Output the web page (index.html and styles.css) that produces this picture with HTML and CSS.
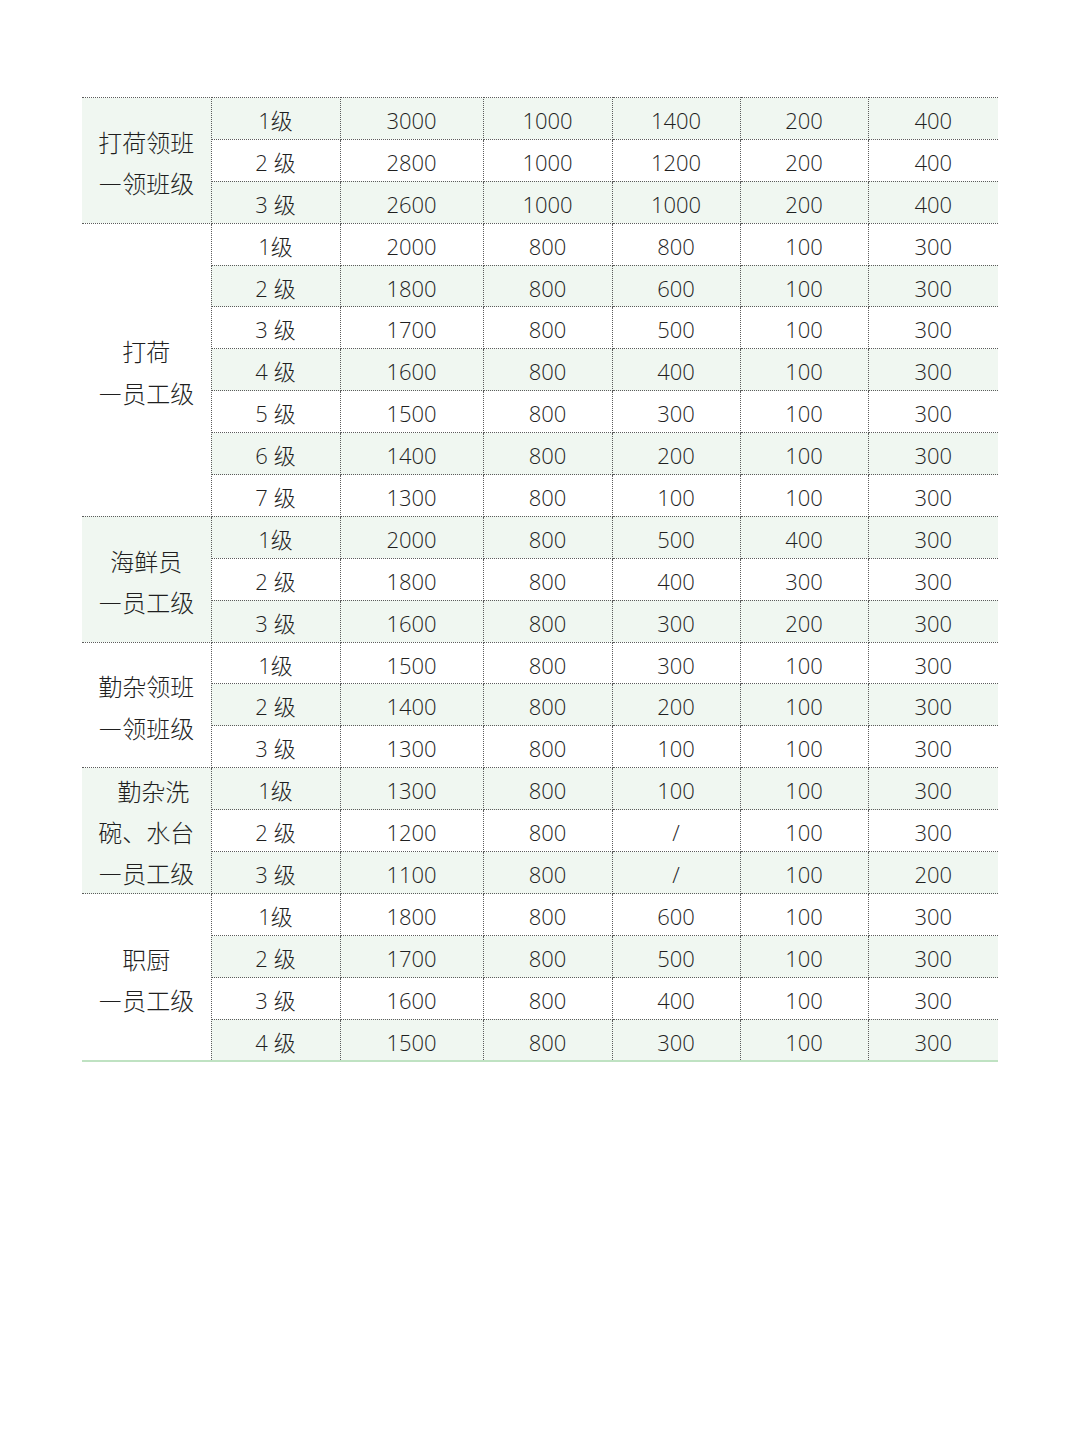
FILE: index.html
```html
<!DOCTYPE html>
<html lang="zh">
<head>
<meta charset="utf-8">
<title>工资表</title>
<link rel="stylesheet" href="styles.css">
</head>
<body>
<div class="page">
<table class="grid">
<colgroup>
<col class="c-group"><col class="c-level"><col class="c-a"><col class="c-b"><col class="c-c"><col class="c-d"><col class="c-e">
</colgroup>
<tbody>
<tr class="g"><td class="group g" rowspan="3">打荷领班<br>—领班级</td><td>1级</td><td>3000</td><td>1000</td><td>1400</td><td>200</td><td>400</td></tr>
<tr class="w"><td>2 级</td><td>2800</td><td>1000</td><td>1200</td><td>200</td><td>400</td></tr>
<tr class="g end"><td>3 级</td><td>2600</td><td>1000</td><td>1000</td><td>200</td><td>400</td></tr>

<tr class="w"><td class="group w end" rowspan="7">打荷<br>—员工级</td><td>1级</td><td>2000</td><td>800</td><td>800</td><td>100</td><td>300</td></tr>
<tr class="g"><td>2 级</td><td>1800</td><td>800</td><td>600</td><td>100</td><td>300</td></tr>
<tr class="w"><td>3 级</td><td>1700</td><td>800</td><td>500</td><td>100</td><td>300</td></tr>
<tr class="g"><td>4 级</td><td>1600</td><td>800</td><td>400</td><td>100</td><td>300</td></tr>
<tr class="w"><td>5 级</td><td>1500</td><td>800</td><td>300</td><td>100</td><td>300</td></tr>
<tr class="g"><td>6 级</td><td>1400</td><td>800</td><td>200</td><td>100</td><td>300</td></tr>
<tr class="w"><td>7 级</td><td>1300</td><td>800</td><td>100</td><td>100</td><td>300</td></tr>

<tr class="g"><td class="group g" rowspan="3">海鲜员<br>—员工级</td><td>1级</td><td>2000</td><td>800</td><td>500</td><td>400</td><td>300</td></tr>
<tr class="w"><td>2 级</td><td>1800</td><td>800</td><td>400</td><td>300</td><td>300</td></tr>
<tr class="g"><td>3 级</td><td>1600</td><td>800</td><td>300</td><td>200</td><td>300</td></tr>

<tr class="w"><td class="group w" rowspan="3">勤杂领班<br>—领班级</td><td>1级</td><td>1500</td><td>800</td><td>300</td><td>100</td><td>300</td></tr>
<tr class="g"><td>2 级</td><td>1400</td><td>800</td><td>200</td><td>100</td><td>300</td></tr>
<tr class="w"><td>3 级</td><td>1300</td><td>800</td><td>100</td><td>100</td><td>300</td></tr>

<tr class="g"><td class="group g tight" rowspan="3"><span class="indent">勤杂洗</span><br>碗、水台<br>—员工级</td><td>1级</td><td>1300</td><td>800</td><td>100</td><td>100</td><td>300</td></tr>
<tr class="w"><td>2 级</td><td>1200</td><td>800</td><td>/</td><td>100</td><td>300</td></tr>
<tr class="g"><td>3 级</td><td>1100</td><td>800</td><td>/</td><td>100</td><td>200</td></tr>

<tr class="w last"><td class="group w" rowspan="4">职厨<br>—员工级</td><td>1级</td><td>1800</td><td>800</td><td>600</td><td>100</td><td>300</td></tr>
<tr class="g last"><td>2 级</td><td>1700</td><td>800</td><td>500</td><td>100</td><td>300</td></tr>
<tr class="w last"><td>3 级</td><td>1600</td><td>800</td><td>400</td><td>100</td><td>300</td></tr>
<tr class="g last bottom"><td>4 级</td><td>1500</td><td>800</td><td>300</td><td>100</td><td>300</td></tr>
</tbody>
</table>
</div>
</body>
</html>
```

FILE: styles.css
```css
html, body {
  margin: 0;
  padding: 0;
  background: #ffffff;
}

.page {
  padding: 97px 0 0 82px;
}

.grid {
  width: 916px;
  table-layout: fixed;
  border-collapse: collapse;
  font-family: "Open Sans", "Noto Sans CJK SC", sans-serif;
  font-weight: 300;
  font-size: 22px;
  color: #1f1f1f;
}

.c-group { width: 129px; }
.c-level { width: 129px; }
.c-a { width: 143px; }
.c-b { width: 129px; }
.c-c { width: 128px; }
.c-d { width: 128px; }
.c-e { width: 130px; }

.grid tr {
  height: 41.9px;
}

.grid td {
  padding: 3px 0 0 0;
  text-align: center;
  vertical-align: middle;
  border: 1px dotted #5c5c5c;
  line-height: 36px;
  white-space: nowrap;
}

.grid tr td:first-child,
.grid td.group {
  border-left: none;
}

.grid tr td:last-child {
  border-right: none;
}

.grid tr.g td { background: #f0f7f1; }
.grid tr.w td { background: #ffffff; }
.grid tr td.group.g { background: #f0f7f1; }
.grid tr td.group.w { background: #ffffff; }

.grid td.group {
  font-family: "Noto Sans CJK SC", sans-serif;
  font-size: 24px;
  line-height: 41.5px;
  padding-top: 4px;
  color: #1f1f1f;
}

.grid td.group.tight {
  line-height: 41px;
  padding-top: 2px;
}

.grid tr.bottom td,
.grid tr.last td.group {
  border-bottom: 2px solid #bfe2c2;
}

.indent {
  padding-left: 14px;
}
```
